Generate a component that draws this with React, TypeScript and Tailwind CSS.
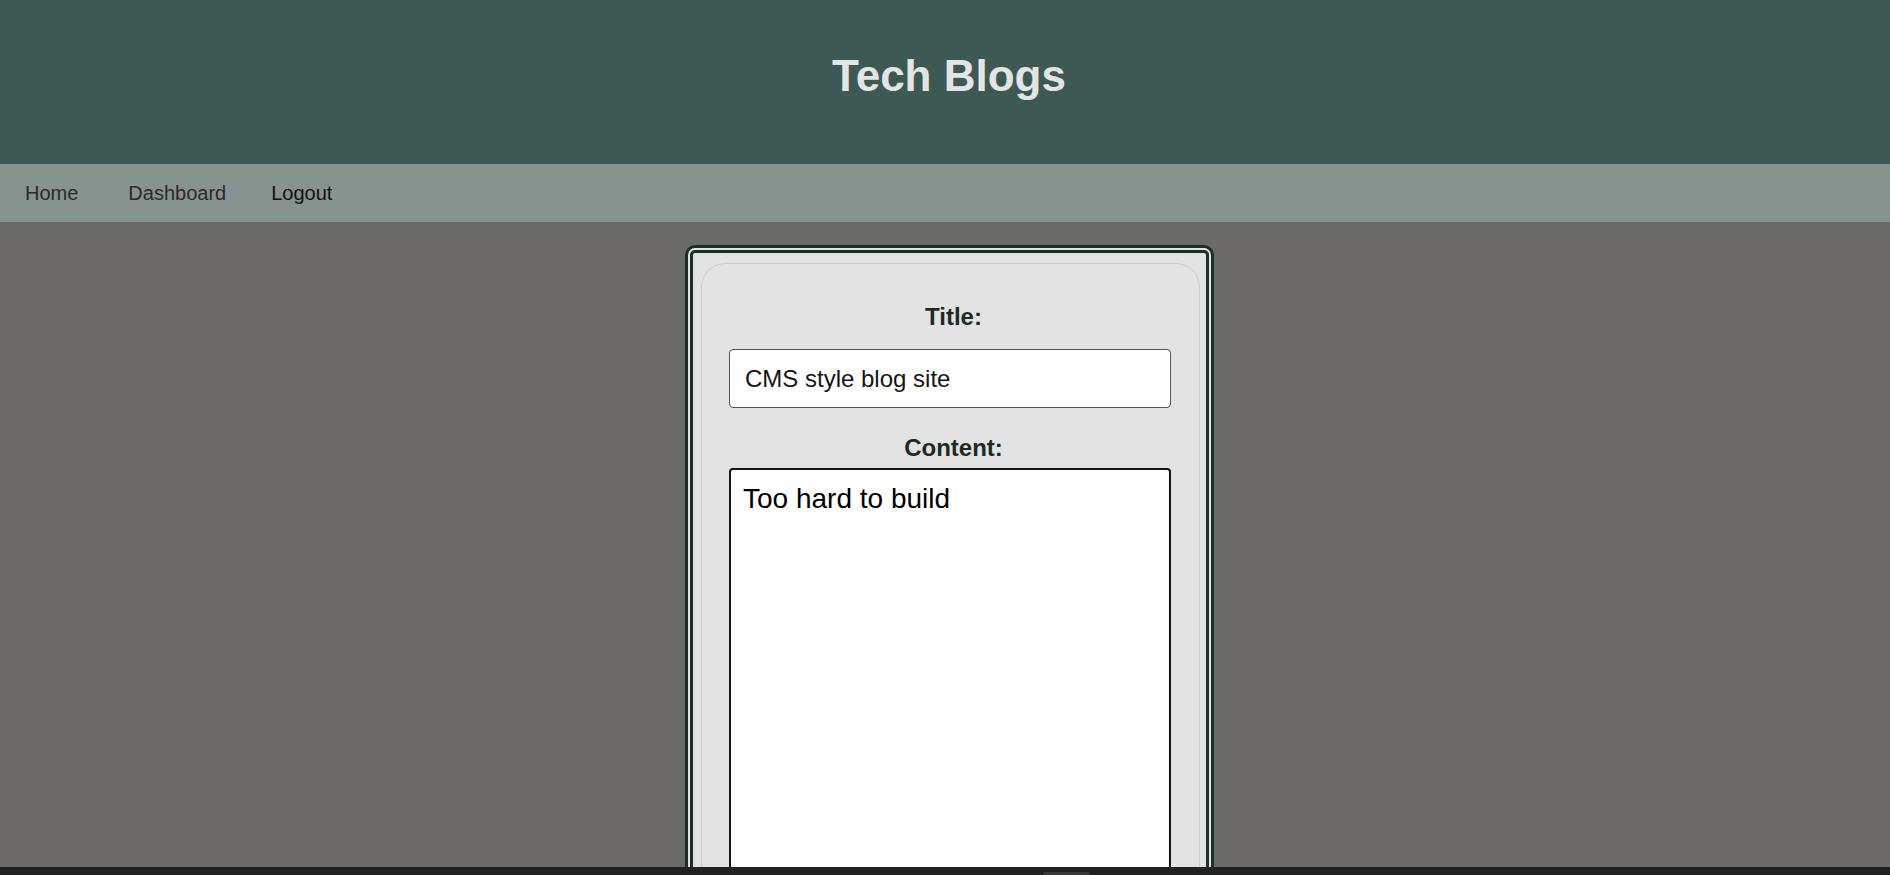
export default function App() {
  return (
    <div className="min-h-screen bg-[#6b6a66] font-['Liberation_Sans',Arial,sans-serif]">
      <header className="h-[164px] bg-[#3d5953] pl-2 pt-[51px] text-center">
        <h1 className="text-[44px] font-bold leading-[normal] text-[#e4e4e4]">Tech Blogs</h1>
      </header>

      <nav className="flex h-[58px] items-center bg-[#87938f] pl-[25px] text-[20px] leading-[normal]">
        <a className="text-[#2a2a2a]">Home</a>
        <a className="ml-[50px] text-[#2a2a2a]">Dashboard</a>
        <a className="ml-[45px] text-[#111]">Logout</a>
      </nav>

      <main className="flex justify-center pl-2 pt-[23px]">
        <div className="w-[529px] rounded-[10px] border-8 border-double border-[#1c2f28] bg-[#e3e3e3] pb-8 pl-2 pr-[6px] pt-[10px]">
          <form className="flex flex-col items-center rounded-[24px] border border-[#cdcdcd] px-7 pb-10 pt-[39px]">
            <label className="mb-[18px] pl-[7px] text-[24px] font-bold leading-[normal] text-[#1c2a25]">Title:</label>
            <input
              readOnly
              value="CMS style blog site"
              className="h-[59px] w-[442px] rounded-[4px] border border-[#555] bg-white pl-[15px] text-[24px] text-[#151515] outline-none"
            />
            <label className="mb-[6px] mt-[26px] pl-[7px] text-[24px] font-bold leading-[normal] text-[#1c2a25]">Content:</label>
            <textarea
              readOnly
              value="Too hard to build"
              className="h-[520px] w-[442px] resize-none rounded-[4px] border-2 border-[#151515] bg-white px-3 pt-[13px] text-[28px] leading-[normal] text-black outline-none"
            />
          </form>
        </div>
      </main>

      <div className="fixed bottom-0 left-0 h-[8px] w-full bg-[#212121]">
        <div className="ml-[1043px] mt-[5px] h-[3px] w-[47px] rounded-t-[3px] bg-[#383838]" />
      </div>
    </div>
  );
}
